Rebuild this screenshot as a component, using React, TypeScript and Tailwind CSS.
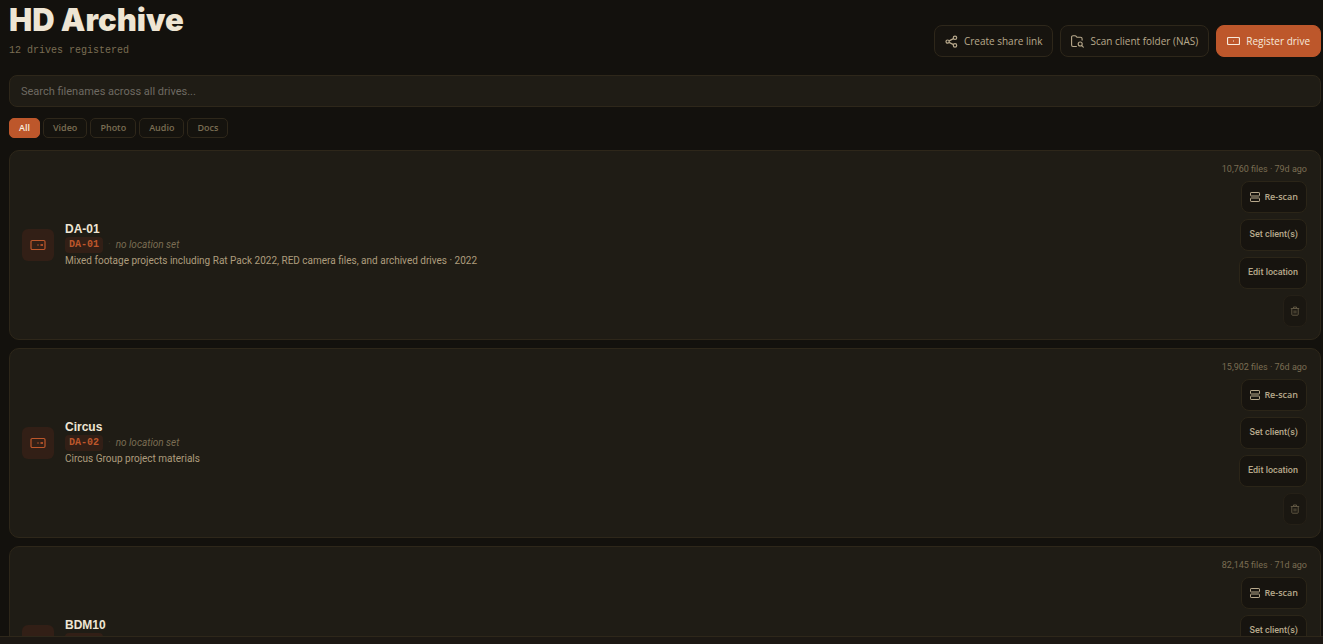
import React, { useState } from "react";

interface Drive {
  name: string;
  code: string;
  description: string;
  files: string;
  scanned: string;
}

const drives: Drive[] = [
  {
    name: "DA-01",
    code: "DA-01",
    description:
      "Mixed footage projects including Rat Pack 2022, RED camera files, and archived drives · 2022",
    files: "10,760 files",
    scanned: "79d ago",
  },
  {
    name: "Circus",
    code: "DA-02",
    description: "Circus Group project materials",
    files: "15,902 files",
    scanned: "76d ago",
  },
  {
    name: "BDM10",
    code: "DA-03",
    description: "BDM project materials",
    files: "82,145 files",
    scanned: "71d ago",
  },
];

const filters = ["All", "Video", "Photo", "Audio", "Docs"];

function ShareIcon() {
  return (
    <svg className="size-[13px] shrink-0" viewBox="0 0 13 13" fill="none" stroke="currentColor" strokeWidth="1.2" aria-hidden="true">
      <circle cx="2.6" cy="6.6" r="1.6" />
      <circle cx="10" cy="2.8" r="1.7" />
      <circle cx="10" cy="10.4" r="1.7" />
      <path d="m4.1 5.9 4.4-2.3M4.1 7.4l4.4 2.2" />
    </svg>
  );
}

function FolderSearchIcon() {
  return (
    <svg className="size-[13px] shrink-0" viewBox="0 0 13 13" fill="none" stroke="currentColor" strokeWidth="1.1" strokeLinecap="round" strokeLinejoin="round" aria-hidden="true">
      <path d="M5.4 11.5H2A1.5 1.5 0 0 1 .6 10V2C.6 1.2 1.2.7 2 .7h2.1c.5 0 .8.2 1.1.6l.7 1h3.6c1 0 1.6.6 1.6 1.5v1.3" />
      <circle cx="9.2" cy="9" r="2" />
      <path d="m10.8 10.6 1.5 1.5" />
    </svg>
  );
}

function DriveIcon() {
  return (
    <svg className="size-[13px] shrink-0" viewBox="0 0 13 13" fill="none" stroke="currentColor" aria-hidden="true">
      <rect x="0.5" y="2.5" width="12" height="7" rx="1" strokeWidth="1.2" />
      <path d="M6 6h1" strokeWidth="1.2" />
    </svg>
  );
}

function DriveTileIcon() {
  return (
    <svg className="size-4" viewBox="0 0 16 16" fill="none" stroke="currentColor" aria-hidden="true">
      <rect x="1" y="3.5" width="14" height="9" rx="1.2" strokeWidth="1.2" />
      <path d="M7 8h2" strokeWidth="2" opacity="0.4" />
      <path d="M10.5 8h2.5" strokeWidth="2" opacity="0.85" />
    </svg>
  );
}

function RackIcon() {
  return (
    <svg className="size-[10px] shrink-0" viewBox="0 0 10 10" fill="none" stroke="currentColor" aria-hidden="true">
      <rect x="0.5" y="0.5" width="9" height="3.5" rx="0.6" />
      <rect x="0.5" y="6" width="9" height="3.5" rx="0.6" />
    </svg>
  );
}

function TrashIcon() {
  return (
    <svg className="size-[10px]" viewBox="0 0 10 10" fill="none" stroke="currentColor" aria-hidden="true">
      <path d="M.8 2.5h8.4M3.5 2.3V1h3v1.3M1.8 2.7v5.8c0 .4.3.7.7.7h5c.4 0 .7-.3.7-.7V2.7M4.1 4.4v3M5.9 4.4v3" />
    </svg>
  );
}

function DriveCard({ drive }: { drive: Drive }) {
  const action =
    "flex h-8 items-center rounded-lg border border-[#2b2518] bg-[#17140f] px-2 text-[9px] text-[#b8a98c]";

  return (
    <article className="flex items-center gap-[11px] rounded-[10px] border border-[#2e271a] bg-[#1f1c15] py-3 pr-[13px] pl-3">
      <div className="flex size-8 shrink-0 items-center justify-center rounded-md bg-[#321f16] text-[#bd572b]">
        <DriveTileIcon />
      </div>
      <div className="min-w-0 flex-1">
        <h2 className="font-['Liberation_Sans',sans-serif] text-xs leading-4 font-bold text-[#eee5d3]">{drive.name}</h2>
        <div className="flex h-4 items-center gap-[5px] text-[10px] leading-4 text-[#7a6d53]">
          <span className="rounded bg-[#321f16] px-1 font-['Liberation_Mono',monospace] font-bold text-[#bd572b]">
            {drive.code}
          </span>
          <span className="text-[#3e3625]">·</span>
          <span className="italic">no location set</span>
        </div>
        <p className="text-[10px] leading-4 text-[#ae9c7d]">{drive.description}</p>
      </div>
      <div className="flex shrink-0 flex-col items-end gap-1.5">
        <span className="text-[9px] leading-3 text-[#7a6d53]">
          {drive.files} · {drive.scanned}
        </span>
        <button type="button" className={`${action} gap-1 font-['Open_Sans',sans-serif] font-semibold`}>
          <RackIcon />
          Re-scan
        </button>
        <button type="button" className={`${action} font-medium`}>
          Set client(s)
        </button>
        <button type="button" className={`${action} font-medium`}>
          Edit location
        </button>
        <button
          type="button"
          aria-label={`Delete ${drive.name}`}
          className="flex h-8 w-6 items-center justify-center rounded-lg border border-[#252017] bg-[#1a1711] text-[#5f5642]"
        >
          <TrashIcon />
        </button>
      </div>
    </article>
  );
}

export default function App() {
  const [query, setQuery] = useState("");
  const [filter, setFilter] = useState("All");

  const headerButton =
    "flex h-8 items-center gap-1.5 rounded-lg border px-2.5 font-['Open_Sans',sans-serif] text-[10px] font-medium whitespace-nowrap";

  return (
    <div className="flex h-screen flex-col bg-[#13110d] font-['Roboto',sans-serif] text-[#b8a98c]">
      <main className="min-h-0 flex-1 overflow-y-auto pt-1 pr-0.5 pl-[9px] [scrollbar-width:none]">
        <header className="flex flex-wrap items-end justify-between gap-2">
          <div>
            <h1 className="font-['Inter',sans-serif] text-[31px] leading-8 font-black text-[#eee5d3]">HD Archive</h1>
            <p className="mt-[9px] font-['Liberation_Mono',monospace] text-[10px] leading-3 text-[#7a6d53]">
              12 drives registered
            </p>
          </div>
          <div className="flex flex-wrap gap-[7px]">
            <button type="button" className={`${headerButton} border-[#2e271a] bg-[#17140f]`}>
              <ShareIcon />
              Create share link
            </button>
            <button type="button" className={`${headerButton} border-[#2e271a] bg-[#17140f]`}>
              <FolderSearchIcon />
              Scan client folder (NAS)
            </button>
            <button type="button" className={`${headerButton} border-[#bd572b] bg-[#bd572b] text-[#f8eadb]`}>
              <DriveIcon />
              Register drive
            </button>
          </div>
        </header>

        <input
          type="search"
          aria-label="Search filenames"
          value={query}
          onChange={(e) => setQuery(e.target.value)}
          placeholder="Search filenames across all drives..."
          className="mt-[18px] block h-8 w-full rounded-lg border border-[#2e271a] bg-[#1f1c15] px-[11px] text-[11px] outline-none placeholder:text-[#6e6a62]"
        />

        <div className="mt-[11px] flex gap-[3px]">
          {filters.map((name) => (
            <button
              key={name}
              type="button"
              aria-pressed={filter === name}
              onClick={() => setFilter(name)}
              className={`flex h-5 items-center rounded-[5px] border px-[9px] font-['Open_Sans',sans-serif] text-[9px] font-semibold ${
                filter === name
                  ? "border-[#bd572b] bg-[#bd572b] text-[#f8eadb]"
                  : "border-[#2e271a] bg-[#15130e] text-[#7a6d53]"
              }`}
            >
              {name}
            </button>
          ))}
        </div>

        <div className="mt-3 flex flex-col gap-2">
          {drives.map((drive) => (
            <DriveCard key={drive.name} drive={drive} />
          ))}
        </div>
      </main>
      <footer className="h-2 shrink-0 border-t border-[#2e271a] bg-[#1c1813]" />
    </div>
  );
}
